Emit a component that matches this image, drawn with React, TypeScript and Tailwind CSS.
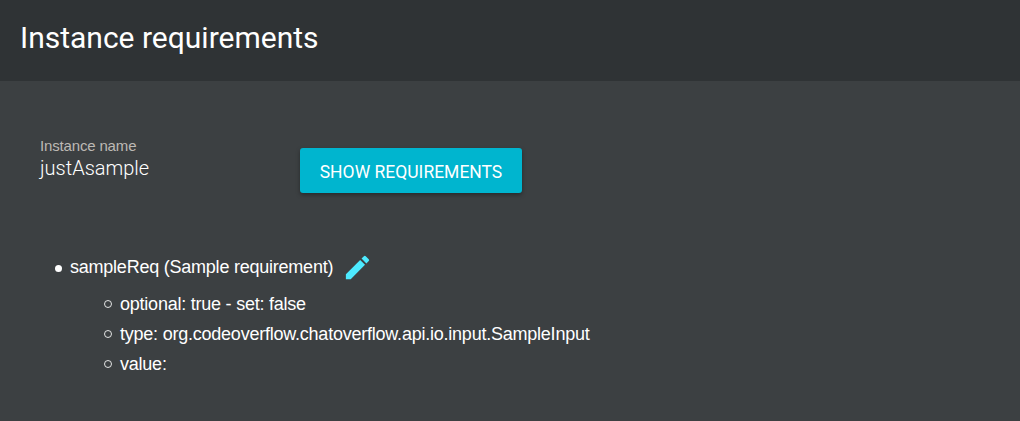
const details = [
  'optional: true - set: false',
  'type: org.codeoverflow.chatoverflow.api.io.input.SampleInput',
  'value:',
];

function PencilIcon() {
  return (
    <svg viewBox="0 0 24 24" className="size-[31px] fill-[#4deaff]" aria-hidden="true">
      <path d="M3 17.25V21h3.75L17.81 9.94l-3.75-3.75L3 17.25zM20.71 7.04a1 1 0 0 0 0-1.41l-2.34-2.34a1 1 0 0 0-1.41 0l-1.83 1.83 3.75 3.75 1.83-1.83z" />
    </svg>
  );
}

export default function App() {
  return (
    <div className="h-[421px] w-full overflow-hidden bg-[#3c4042] text-white">
      <header className="flex h-[81px] items-start bg-[#2f3335] px-5 pt-[18px]">
        <h1 className="font-['Roboto',sans-serif] text-[30px] leading-10 font-normal">Instance requirements</h1>
      </header>

      <main className="px-10 pt-[55px]">
        <div className="flex h-[95px] items-start">
          <div className="w-[260px]">
            <div className="font-['Liberation_Sans',sans-serif] text-[15px] leading-5 tracking-[-0.16px] text-[#bdb9b4]">Instance name</div>
            <div className="font-['Roboto',sans-serif] text-[20px] leading-6 font-light">justAsample</div>
          </div>
          <button className="mt-3 h-[45px] w-[222px] rounded-[3px] bg-[#00b5cf] pt-[3px] font-['Roboto',sans-serif] text-[17.5px] whitespace-nowrap shadow-[0_2px_4px_rgba(0,0,0,0.35)]">
            SHOW REQUIREMENTS
          </button>
        </div>

        <ul className="pt-[18px] font-['Liberation_Sans',sans-serif] text-[18px] tracking-[-0.23px]">
          <li>
            <div className="flex h-10 items-start">
              <span className="mt-4 ml-[15px] size-[7px] rounded-full bg-white" />
              <span className="ml-2 w-[263px] pt-[5px] leading-[26px] whitespace-nowrap">sampleReq (Sample requirement)</span>
              <button className="mt-[3px] ml-[9px]" aria-label="Edit requirement">
                <PencilIcon />
              </button>
            </div>
            <ul className="pl-16">
              {details.map((detail) => (
                <li key={detail} className="flex h-[30px] items-center whitespace-nowrap">
                  <span className="mr-2 size-2 rounded-full border border-white/85" />
                  {detail}
                </li>
              ))}
            </ul>
          </li>
        </ul>
      </main>
    </div>
  );
}
